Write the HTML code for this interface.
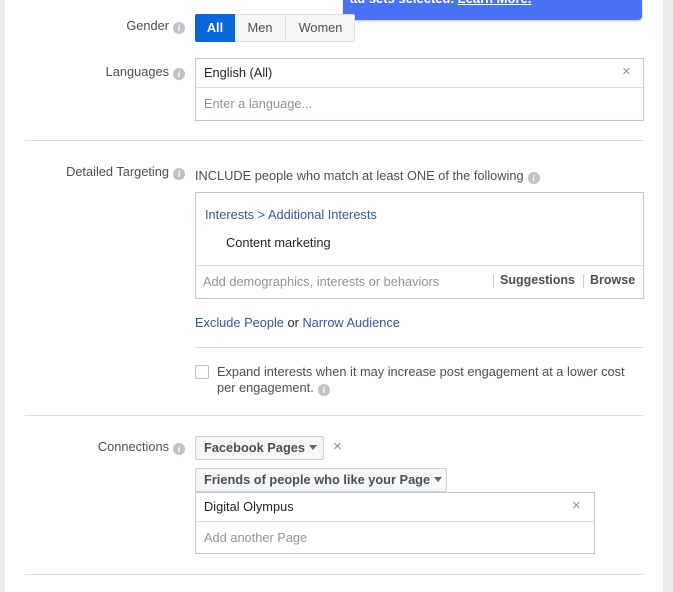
<!DOCTYPE html>
<html><head><style>
*{margin:0;padding:0;box-sizing:border-box}
body{width:673px;height:592px;background:#e9eaed;position:relative;overflow:hidden;font-family:"Liberation Sans",Helvetica,Arial,sans-serif;font-size:12.8px;color:#1d2129}
#main{position:absolute;left:5px;top:0;width:658px;height:592px;background:#fff}
.a{position:absolute;white-space:nowrap}
.lbl{color:#4b4f56;text-align:right;width:185px;left:0}
.i{display:inline-block;width:12px;height:12px;border-radius:50%;background:#bec2c9;color:#fff;font-size:9px;font-weight:bold;text-align:center;line-height:12px;font-family:"Liberation Serif",serif;font-style:italic;vertical-align:-1px;margin-left:4px}
.hr{position:absolute;height:1px;background:#dddfe2}
.box{position:absolute;border:1px solid #bdc7d8;background:#fff}
.ph{color:#90949c}
.link{color:#365899}
.btn{position:absolute;background:#f6f7f9;border:1px solid #ced0d4;border-radius:2px;font-weight:bold;color:#4b4f56;height:24px;line-height:22px;padding-left:8px}
.x{color:#90949c;font-size:15px}
.tri{display:inline-block;width:0;height:0;border-left:4px solid transparent;border-right:4px solid transparent;border-top:5px solid #606770;vertical-align:2px;margin-left:4px}
</style></head><body>
<div id="main"></div>
<div class="a" style="left:343px;top:0;width:299px;height:20px;background:#4a72f5;border-radius:0 0 4px 4px;box-shadow:0 1px 2px rgba(0,0,0,.25);color:#fff;font-weight:bold;font-size:13px;overflow:hidden"><span style="position:absolute;left:7px;top:-9px;line-height:15px">ad sets selected. <u>Learn More.</u></span></div>

<div class="a lbl" style="top:18px">Gender<span class="i">i</span></div>
<div class="a" style="left:195px;top:14px;width:160px;height:28px;border:1px solid #dddfe2;border-radius:2px;background:#f6f7f9"></div>
<div class="a" style="left:195px;top:14px;width:40px;height:28px;background:#0866d6;color:#fff;font-weight:bold;text-align:center;line-height:28px;border-radius:2px 0 0 2px">All</div>
<div class="a" style="left:235px;top:14px;width:51px;height:28px;border-right:1px solid #dddfe2;text-align:center;line-height:28px;color:#4b4f56">Men</div>
<div class="a" style="left:286px;top:14px;width:69px;height:28px;text-align:center;line-height:28px;color:#4b4f56">Women</div>

<div class="a lbl" style="top:64px">Languages<span class="i">i</span></div>
<div class="box" style="left:195px;top:58px;width:449px;height:63px"></div>
<div class="hr" style="left:196px;top:87px;width:447px;background:#dddfe2"></div>
<div class="a" style="left:204px;top:65px">English (All)</div>
<div class="a x" style="left:622px;top:63px">×</div>
<div class="a ph" style="left:204px;top:96px">Enter a language...</div>

<div class="hr" style="left:25px;top:140px;width:618px"></div>

<div class="a lbl" style="top:164px">Detailed Targeting<span class="i">i</span></div>
<div class="a" style="left:195px;top:168px;color:#4b4f56">INCLUDE people who match at least ONE of the following<span class="i">i</span></div>
<div class="box" style="left:195px;top:192px;width:449px;height:107px"></div>
<div class="hr" style="left:196px;top:265px;width:447px"></div>
<div class="a link" style="left:205px;top:207px">Interests &gt; Additional Interests</div>
<div class="a" style="left:226px;top:235px">Content marketing</div>
<div class="a ph" style="left:203px;top:274px">Add demographics, interests or behaviors</div>
<div class="a" style="left:493px;top:274px;width:1px;height:14px;background:#ced0d4"></div>
<div class="a" style="left:500px;top:273px;font-weight:bold;color:#4b4f56;font-size:12.5px">Suggestions</div>
<div class="a" style="left:583px;top:274px;width:1px;height:14px;background:#ced0d4"></div>
<div class="a" style="left:590px;top:273px;font-weight:bold;color:#4b4f56;font-size:12.5px">Browse</div>
<div class="a" style="left:195px;top:315px"><span class="link">Exclude People</span> or <span class="link">Narrow Audience</span></div>
<div class="hr" style="left:195px;top:347px;width:449px"></div>
<div class="a" style="left:195px;top:365px;width:14px;height:14px;border:1px solid #bec2c9;border-radius:2px"></div>
<div class="a" style="left:217px;top:364px;line-height:16px;color:#4b4f56">Expand interests when it may increase post engagement at a lower cost<br>per engagement.<span class="i">i</span></div>

<div class="hr" style="left:25px;top:415px;width:618px"></div>

<div class="a lbl" style="top:439px">Connections<span class="i">i</span></div>
<div class="btn" style="left:195px;top:436px;width:129px">Facebook Pages<span class="tri"></span></div>
<div class="a x" style="left:333px;top:438px">×</div>
<div class="btn" style="left:195px;top:468px;width:252px">Friends of people who like your Page<span class="tri"></span></div>
<div class="box" style="left:195px;top:492px;width:400px;height:62px"></div>
<div class="hr" style="left:196px;top:521px;width:398px"></div>
<div class="a" style="left:204px;top:499px">Digital Olympus</div>
<div class="a x" style="left:572px;top:497px">×</div>
<div class="a ph" style="left:204px;top:530px">Add another Page</div>

<div class="hr" style="left:25px;top:574px;width:618px"></div>
</body></html>
